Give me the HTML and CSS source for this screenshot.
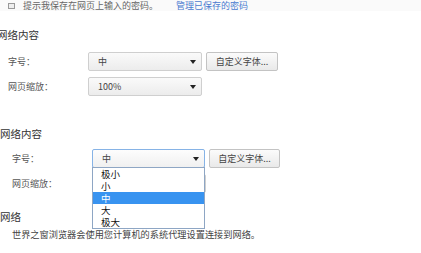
FILE: index.html
```html
<!DOCTYPE html>
<html lang="zh-CN">
<head>
    <meta charset="UTF-8">
    <meta name="viewport" content="width=device-width, initial-scale=1.0">
    <title>设置 - 网络内容</title>
    <link rel="stylesheet" href="styles.css">
</head>
<body>
    <div class="top-strip">
        <span class="checkbox"></span>
        <span class="top-text">提示我保存在网页上输入的密码。</span>
        <a class="top-link" href="#">管理已保存的密码</a>
    </div>

    <!-- 网络内容 (收起状态) -->
    <div class="section first">
        <h3 class="section-title">网络内容</h3>
        <div class="form-row">
            <label class="row-label">字号：</label>
            <div class="select">
                <span class="select-value">中</span>
                <span class="select-arrow"></span>
            </div>
            <button class="btn">自定义字体...</button>
        </div>
        <div class="form-row">
            <label class="row-label">网页缩放：</label>
            <div class="select">
                <span class="select-value">100%</span>
                <span class="select-arrow"></span>
            </div>
        </div>
    </div>

    <!-- 网络内容 (下拉展开) -->
    <div class="section second">
        <h3 class="section-title">网络内容</h3>
        <div class="form-row">
            <label class="row-label">字号：</label>
            <div class="select focused">
                <span class="select-value">中</span>
                <span class="select-arrow"></span>
                <ul class="dropdown">
                    <li>极小</li>
                    <li>小</li>
                    <li class="selected">中</li>
                    <li>大</li>
                    <li>极大</li>
                </ul>
            </div>
            <button class="btn">自定义字体...</button>
        </div>
        <div class="form-row">
            <label class="row-label">网页缩放：</label>
            <!-- covered by the open dropdown -->
            <div class="select"></div>
        </div>
    </div>

    <div class="section network">
        <h3 class="section-title">网络</h3>
        <p class="desc">世界之窗浏览器会使用您计算机的系统代理设置连接到网络。</p>
    </div>
</body>
</html>
```

FILE: styles.css
```css
/* Base Styles */
* {
    box-sizing: border-box;
    margin: 0;
    padding: 0;
}

body {
    font-family: "Noto Sans CJK SC", "Noto Sans", sans-serif;
    background: #fff;
    color: #333;
    overflow: hidden;
}

/* Top strip (cut off) */
.top-strip {
    height: 11px;
    display: flex;
    align-items: center;
    padding-left: 8px;
    background: #fafafa;
    font-size: 9px;
    line-height: 11px;
}

.checkbox {
    width: 7px;
    height: 6px;
    border: 1px solid #999;
    background: #eee;
    margin-right: 8px;
}

.top-text {
    color: #666;
}

.top-link {
    color: #4a7bd0;
    text-decoration: none;
    margin-left: 18px;
}

/* Sections */
.section-title {
    font-size: 10.5px;
    font-weight: normal;
    color: #333;
    height: 14px;
    line-height: 14px;
}

.first .section-title {
    margin-top: 17px;
    margin-left: -3px;
}

.second {
    padding-left: 4px;
}

.second .section-title {
    margin-top: 31px;
    margin-left: -4px;
}

.form-row {
    display: flex;
    align-items: center;
    height: 19px;
    margin-top: 6px;
}

.section-title + .form-row {
    margin-top: 10px;
}

.second .section-title + .form-row {
    margin-top: 8px;
}

.row-label {
    width: 88px;
    padding-left: 8px;
    font-size: 9px;
    color: #555;
}

/* Select */
.select {
    position: relative;
    width: 114px;
    height: 19px;
    display: flex;
    align-items: center;
    justify-content: space-between;
    padding: 0 5px 0 9px;
    border: 1px solid #cfcfcf;
    border-radius: 2px;
    background: linear-gradient(#fafafa, #ececec);
    font-size: 9px;
    color: #444;
}

.select.focused {
    width: 113px;
    border-color: #86b3e6;
    background: linear-gradient(#fdfdfd, #f0f0f0);
}

.select-arrow {
    width: 0;
    height: 0;
    border-left: 3px solid transparent;
    border-right: 3px solid transparent;
    border-top: 4px solid #222;
}

.dropdown {
    position: absolute;
    top: 17px;
    left: -1px;
    width: 113px;
    list-style: none;
    background: #fff;
    border: 1px solid #8ea6c4;
    padding: 0;
    z-index: 2;
}

.dropdown li {
    height: 12px;
    line-height: 12px;
    padding-left: 8px;
    font-size: 9.5px;
    color: #111;
}

.dropdown li.selected {
    background: #3893f0;
    color: #fff;
}

/* Button */
.btn {
    width: 72px;
    height: 19px;
    margin-left: 4px;
    border: 1px solid #c3c3c3;
    border-radius: 2px;
    background: linear-gradient(#fbfbfb, #e9e9e9);
    font-family: inherit;
    font-size: 9px;
    color: #444;
}

.second .btn {
    width: 71px;
}

/* Network */
.network .section-title {
    margin-top: 17px;
}

.desc {
    margin-top: 4px;
    padding-left: 12px;
    font-size: 9.2px;
    line-height: 12px;
    color: #444;
}
```
